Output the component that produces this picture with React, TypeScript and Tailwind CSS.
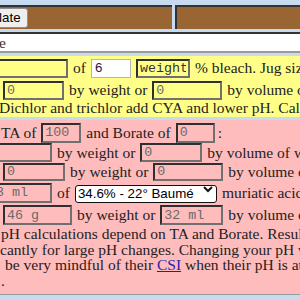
import React from "react";

const serif = "font-['Liberation_Serif',serif] text-[15.5px] text-[#222]";
const box =
  "shrink-0 border-2 border-t-[#2f2f2f] border-l-[#2f2f2f] border-b-[#707070] border-r-[#707070] px-[2px] font-['Liberation_Mono',monospace] text-[13.33px] leading-none text-[#6a6a6a] outline-none";

function Field({ value = "", className }: { value?: string; className: string }) {
  return <input readOnly value={value} className={`${box} ${className}`} />;
}

function Row({ className, children }: { className: string; children: React.ReactNode }) {
  return <div className={`flex items-center gap-[5px] whitespace-nowrap ${className}`}>{children}</div>;
}

export default function App() {
  return (
    <div className={`h-[300px] w-[300px] overflow-hidden bg-[#c6dbef] ${serif}`}>
      <div className="h-[5px]" />

      {/* header bar */}
      <div className="flex h-[24px] gap-[3px]">
        <div className="flex w-[172px] items-center border-t-2 border-[#333] bg-[#996633]">
          <button className="-ml-[42px] h-[20px] shrink-0 rounded-[3px] border border-[#8f8f8f] bg-[#efefef] px-[6px] font-['Liberation_Sans',sans-serif] text-[13.33px] leading-none text-black">
            Calculate
          </button>
        </div>
        <div className="flex-1 border-t-2 border-l-2 border-[#333] bg-[#996633]" />
      </div>

      <div className="mt-[3px] flex h-[21px] items-center border-t-2 border-b-2 border-t-[#333] border-b-[#9a9a9a] bg-white">
        <span className="-ml-[1px] text-[#333]">e</span>
      </div>

      {/* bleach / chlorine */}
      <div className="mt-[3px] h-[61px] bg-[#ffff88] pt-[2px]">
        <Row className="h-[20px]">
          <Field className="-ml-[10px] h-[19px] w-[78px] bg-[#ffff88]" />
          <span>of</span>
          <input
            readOnly
            value="6"
            className="h-[19px] w-[40px] shrink-0 border border-[#b5b5b5] bg-white px-[3px] font-['Liberation_Sans',sans-serif] text-[13.33px] text-[#1e2246] outline-none"
          />
          <Field value="weight" className="h-[19px] w-[54px] bg-[#ffff88] text-[#333]" />
          <span>% bleach. Jug size</span>
        </Row>
        <Row className="mt-[2px] h-[20px]">
          <Field value="0" className="ml-[3px] h-[19px] w-[61px] bg-[#ffff88]" />
          <span>by weight or</span>
          <Field value="0" className="h-[19px] w-[70px] bg-[#ffff88]" />
          <span>by volume of</span>
        </Row>
        <div className="-ml-[1px] h-[17px] whitespace-nowrap leading-[15px]">
          Dichlor and trichlor add CYA and lower pH. Cal-hypo
        </div>
      </div>

      {/* acid / pH */}
      <div className="mt-[3px] h-[175px] border-b border-[#9a9a9a] bg-[#ffbcbc] pt-[2px]">
        <Row className="h-[21px]">
          <span className="ml-[1px]">TA of</span>
          <Field value="100" className="h-[20px] w-[40px] bg-[#ffbcbc]" />
          <span>and Borate of</span>
          <Field value="0" className="h-[20px] w-[39px] bg-[#ffbcbc]" />
          <span className="-ml-[2px]">:</span>
        </Row>
        <Row className="h-[19px]">
          <Field className="-ml-[8px] h-[19px] w-[60px] bg-[#ffbcbc]" />
          <span>by weight or</span>
          <Field value="0" className="h-[19px] w-[62px] bg-[#ffbcbc]" />
          <span>by volume of water</span>
        </Row>
        <Row className="h-[19px]">
          <Field value="0" className="ml-[3px] h-[18px] w-[62px] bg-[#ffbcbc]" />
          <span>by weight or</span>
          <Field value="0" className="h-[18px] w-[70px] bg-[#ffbcbc]" />
          <span>by volume of</span>
        </Row>
        <Row className="mt-[1px] h-[21px]">
          <Field value="3 ml" className="-ml-[8px] h-[20px] w-[60px] bg-[#ffbcbc]" />
          <span>of</span>
          <div className="relative shrink-0">
            <select className="h-[18px] w-[142px] appearance-none rounded-[3px] border border-[#111] bg-white pl-[2px] font-['Liberation_Sans',sans-serif] text-[13.33px] leading-none text-black outline-none">
              <option>34.6% - 22° Baumé</option>
            </select>
            <svg
              className="pointer-events-none absolute right-[4px] top-[5px]"
              width="10"
              height="7"
              viewBox="0 0 10 7"
              fill="none"
              stroke="#111"
              strokeWidth="2"
            >
              <polyline points="1,1 5,5 9,1" />
            </svg>
          </div>
          <span>muriatic acid</span>
        </Row>
        <Row className="mt-[2px] h-[20px]">
          <Field value="46 g" className="ml-[3px] h-[20px] w-[69px] bg-[#ffbcbc]" />
          <span>by weight or</span>
          <Field value="32 ml" className="h-[20px] w-[63px] bg-[#ffbcbc]" />
          <span>by volume of</span>
        </Row>
        <div className="mt-[1px] whitespace-nowrap leading-[15.5px]">
          <div className="ml-[1px]">pH calculations depend on TA and Borate. Results</div>
          <div>cantly for large pH changes. Changing your pH will</div>
          <div className="ml-[5px]">
            be very mindful of their{" "}
            <a href="#" className="text-[#1f1fb0] underline">
              CSI
            </a>{" "}
            when their pH is at
          </div>
          <div className="ml-[1px]">.</div>
        </div>
      </div>
    </div>
  );
}
